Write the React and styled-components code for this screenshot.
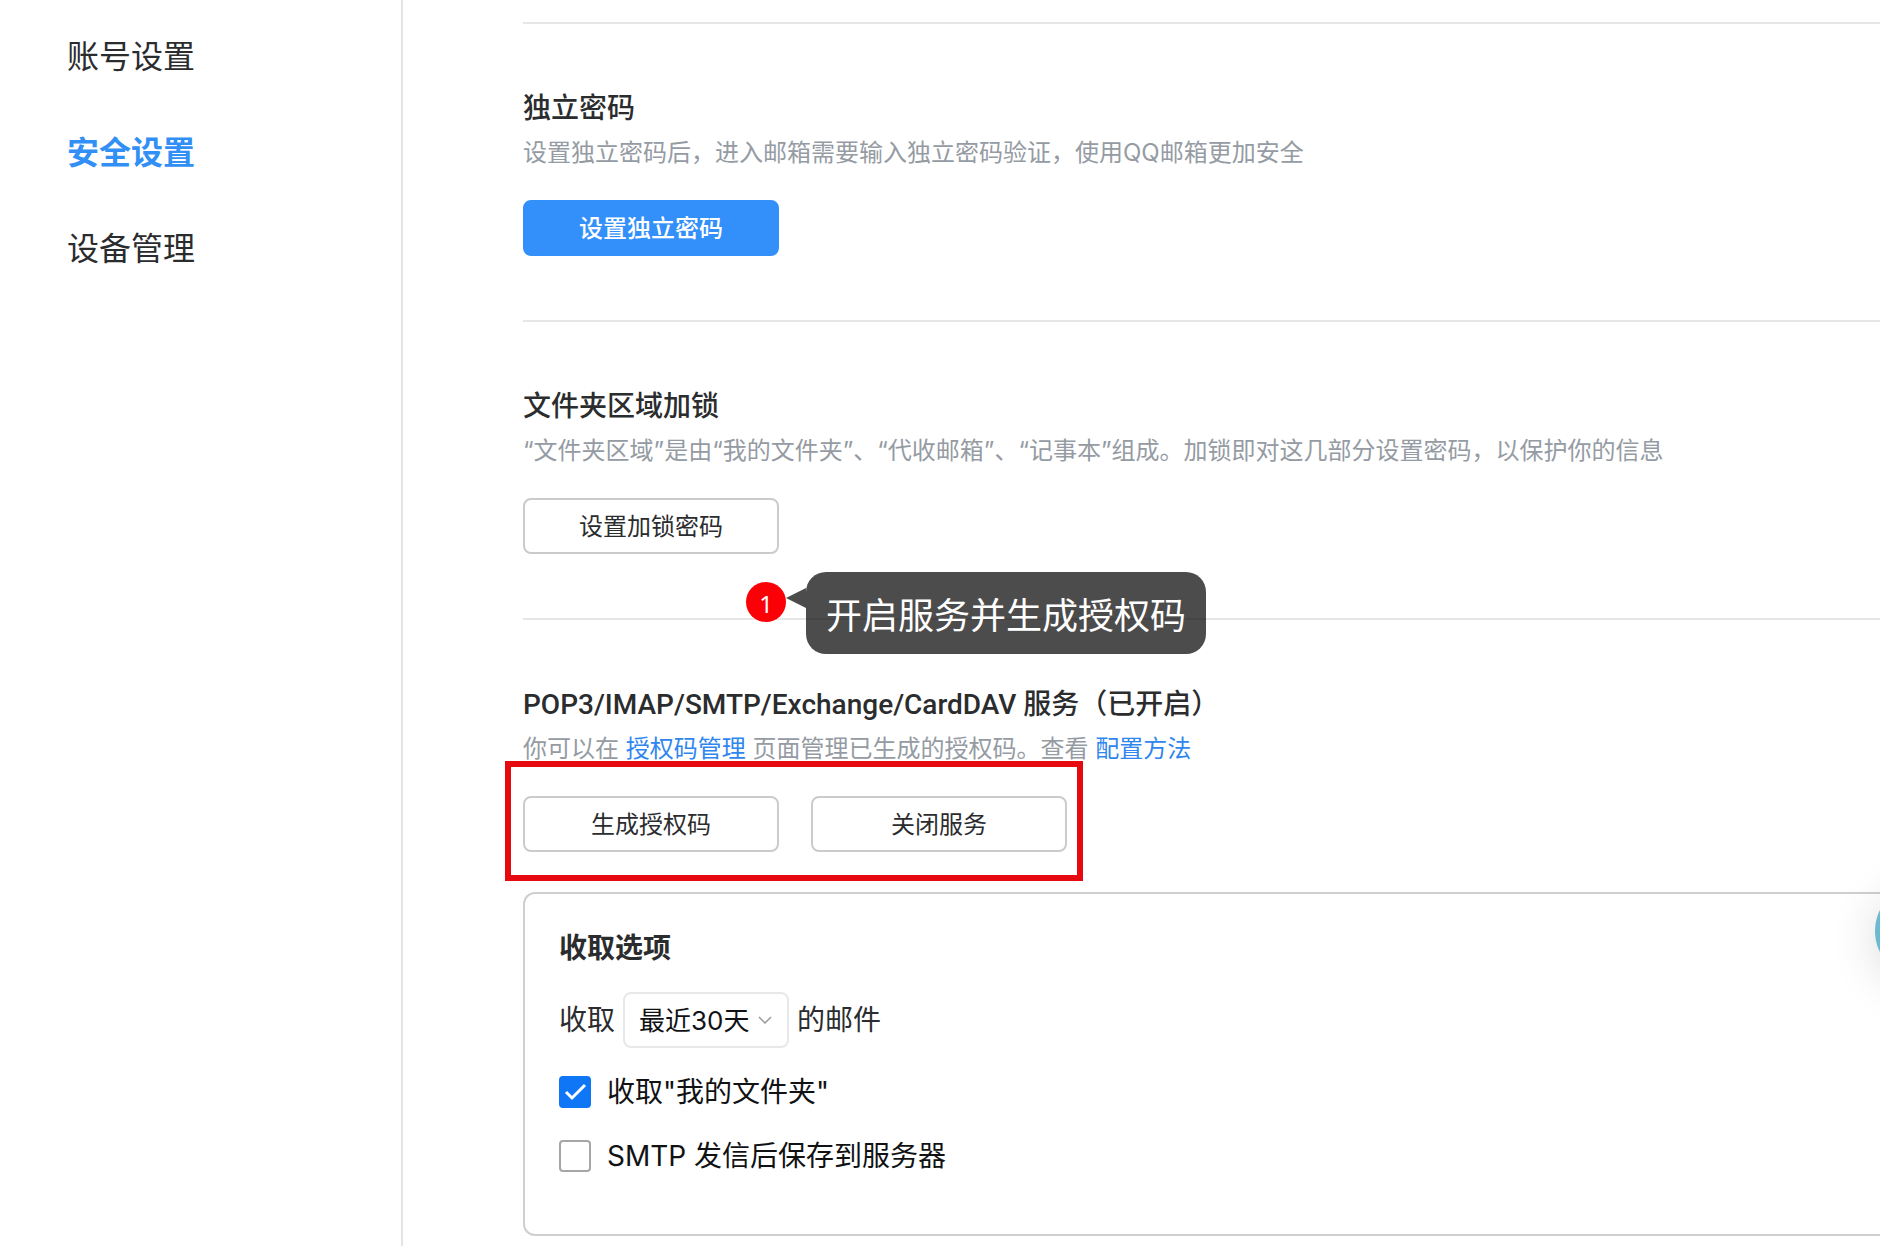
import { useState } from "react";
import styled, { createGlobalStyle } from "styled-components";

const menu = ["账号设置", "安全设置", "设备管理"];

function App() {

  const [current, setCurrent] = useState(1);
  const [range, setRange] = useState("30");
  const [folders, setFolders] = useState(true);
  const [saveSent, setSaveSent] = useState(false);

  return (
    <>
      <GlobalStyle />
      <Layout>
        <Sidebar>
          {menu.map((label, i) => (
            <MenuLink
              key={label}
              href="#"
              $active={i === current}
              onClick={() => setCurrent(i)}
            >
              {label}
            </MenuLink>
          ))}
        </Sidebar>

        <Main>
          <Section $first>
            <Title>独立密码</Title>
            <Desc>设置独立密码后，进入邮箱需要输入独立密码验证，使用QQ邮箱更加安全</Desc>
            <Button $primary>设置独立密码</Button>
          </Section>

          <Section>
            <Title>文件夹区域加锁</Title>
            <Desc>“文件夹区域”是由“我的文件夹”、“代收邮箱”、“记事本”组成。加锁即对这几部分设置密码，以保护你的信息</Desc>
            <Button>设置加锁密码</Button>
            <Callout>
              <Badge>1</Badge>
              <Tail width="20" height="20" viewBox="0 0 20 20">
                <path d="M0 10L20 0V20Z" fill="currentColor" />
              </Tail>
              <Bubble>开启服务并生成授权码</Bubble>
            </Callout>
          </Section>

          <Section $last>
            <Title>POP3/IMAP/SMTP/Exchange/CardDAV 服务（已开启）</Title>
            <Desc>
              你可以在 <a href="#">授权码管理</a> 页面管理已生成的授权码。查看 <a href="#">配置方法</a>
            </Desc>
            <ButtonRow>
              <Button>生成授权码</Button>
              <Button>关闭服务</Button>
            </ButtonRow>

            <Card>
              <Title $bold>收取选项</Title>
              <RangeRow>
                <label htmlFor="range">收取</label>
                <SelectBox>
                  <select id="range" value={range} onChange={(e) => setRange(e.target.value)}>
                    <option value="30">最近30天</option>
                    <option value="0">全部</option>
                  </select>
                  <svg width="14" height="8" viewBox="0 0 14 8" fill="none" stroke="#999" strokeWidth="1.5">
                    <path d="M1 1L7 7L13 1" />
                  </svg>
                </SelectBox>
                <span>的邮件</span>
              </RangeRow>
              <CheckRow>
                <Tick>
                  <input type="checkbox" checked={folders} onChange={() => setFolders(!folders)} />
                  {folders && <CheckMark />}
                </Tick>
                收取"我的文件夹"
              </CheckRow>
              <CheckRow>
                <Tick>
                  <input type="checkbox" checked={saveSent} onChange={() => setSaveSent(!saveSent)} />
                  {saveSent && <CheckMark />}
                </Tick>
                SMTP 发信后保存到服务器
              </CheckRow>
            </Card>
          </Section>
        </Main>
      </Layout>
      <FloatingBall />
    </>
  );
}

function CheckMark() {
  return (
    <svg width="32" height="32" viewBox="0 0 32 32" fill="none" stroke="white" strokeWidth="3">
      <path d="M7 16L13 22L26 9" />
    </svg>
  );
}

const GlobalStyle = createGlobalStyle`
    * {
        box-sizing: border-box;
    }

    body {
        margin: 0;
        background-color: #fff;
        color: #2b2c2e;
        font-family: Inter, "Noto Sans CJK SC", sans-serif;
    }

    button, select {
        font-family: inherit;
    }
`

const Layout = styled.div`
    display: flex;
    min-height: 100vh;
`

const Sidebar = styled.nav`
    flex: 0 0 403px;
    display: flex;
    flex-direction: column;
    gap: 48px;
    padding: 33px 67px;
    border-right: 2px solid #e4e4e4;
`

const MenuLink = styled.a`
    font-size: 32px;
    line-height: 48px;
    text-decoration: none;
    color: ${({ $active }) => ($active ? "#318ff5" : "#2b2c2e")};
    font-weight: ${({ $active }) => ($active ? 700 : 400)};
`

const Main = styled.main`
    flex: 1;
    min-width: 0;
    padding: 22px 0 0 120px;
`

const Section = styled.section`
    position: relative;
    padding: 65px 0 ${({ $last }) => ($last ? "0" : "64px")};
    border-top: ${({ $first }) => ($first ? "2px solid #e6e6e6" : "none")};
    border-bottom: ${({ $last }) => ($last ? "none" : "2px solid #e6e6e6")};
`

const Title = styled.h2`
    margin: 0;
    font-family: Roboto, "Noto Sans CJK SC", sans-serif;
    font-size: 28px;
    line-height: 40px;
    font-weight: ${({ $bold }) => ($bold ? 700 : 500)};
`

const Desc = styled.p`
    margin: 0 0 23px;
    font-size: 24px;
    line-height: 48px;
    color: #959ba3;

    a {
        color: #2f86ee;
        text-decoration: none;
    }
`

const Button = styled.button`
    display: block;
    width: 256px;
    height: 56px;
    padding: 0 0 4px;
    border: 2px solid ${({ $primary }) => ($primary ? "#338ffa" : "#cbcbcb")};
    border-radius: 8px;
    background-color: ${({ $primary }) => ($primary ? "#338ffa" : "#fff")};
    color: ${({ $primary }) => ($primary ? "#fff" : "#2b2c2e")};
    font-size: 24px;
    font-weight: ${({ $primary }) => ($primary ? 500 : 400)};
    cursor: pointer;
`

/* the red frame reaches past the two buttons and over the text above */
const ButtonRow = styled.div`
    position: relative;
    display: flex;
    gap: 32px;
    width: fit-content;

    &::after {
        content: "";
        position: absolute;
        inset: -35px -16px -29px -18px;
        border: 6px solid #e60a10;
        pointer-events: none;
    }
`

const Callout = styled.div`
    position: absolute;
    left: 223px;
    bottom: -36px;
    display: flex;
    font-family: "Noto Sans", "Noto Sans CJK SC", sans-serif;
`

const Badge = styled.span`
    width: 40px;
    height: 40px;
    margin-top: 10px;
    border-radius: 50%;
    background-color: #fb0007;
    color: white;
    font-size: 24px;
    line-height: 43px;
    text-align: center;
`

const Tail = styled.svg`
    margin-top: 16px;
    color: rgba(0, 0, 0, 0.7);
`

const Bubble = styled.div`
    padding: 18px 20px 12px;
    border-radius: 20px;
    background-color: rgba(0, 0, 0, 0.7);
    color: white;
    font-size: 36px;
    line-height: 52px;
    white-space: nowrap;
`

const Card = styled.div`
    margin-top: 40px;
    padding: 35px 34px 62px;
    border: 2px solid #cfcfcf;
    border-right: none;
    border-radius: 12px 0 0 12px;
`

const RangeRow = styled.div`
    display: flex;
    align-items: center;
    gap: 8px;
    margin: 23px 0 28px;
    font-size: 28px;
    line-height: 40px;
`

const SelectBox = styled.span`
    display: grid;
    align-items: center;

    select, svg {
        grid-area: 1 / 1;
    }

    select {
        appearance: none;
        width: 166px;
        height: 56px;
        padding: 0 14px;
        border: 2px solid #e8e8e8;
        border-radius: 8px;
        background-color: #fff;
        color: #111214;
        font-size: 26px;
    }

    svg {
        justify-self: end;
        margin-right: 17px;
        pointer-events: none;
    }
`

const CheckRow = styled.label`
    display: flex;
    align-items: center;
    gap: 16px;
    width: fit-content;
    color: #111214;
    font-size: 28px;
    line-height: 32px;

    & + & {
        margin-top: 32px;
    }
`

const Tick = styled.span`
    display: grid;

    input, svg {
        grid-area: 1 / 1;
    }

    input {
        appearance: none;
        width: 32px;
        height: 32px;
        margin: 0;
        border: 2px solid #a6a6a6;
        border-radius: 4px;
        background-color: #fff;
    }

    input:checked {
        border-color: #0f76f5;
        background-color: #0f76f5;
    }

    svg {
        pointer-events: none;
    }
`

const FloatingBall = styled.div`
    position: fixed;
    top: 883px;
    right: -91px;
    width: 96px;
    height: 96px;
    border-radius: 50%;
    background-color: #6dbad0;
    box-shadow: 0 8px 48px rgba(0, 0, 0, 0.14);
`

export default App;
